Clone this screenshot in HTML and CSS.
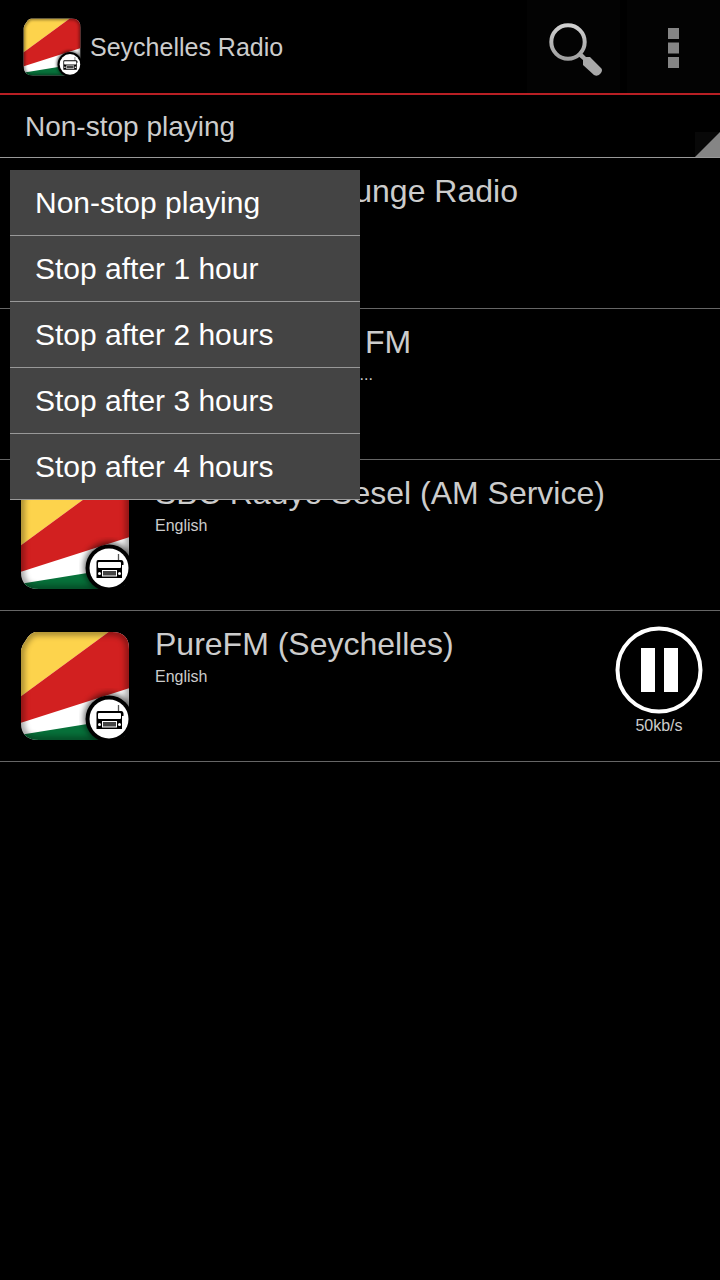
FILE: index.html
```html
<!DOCTYPE html>
<html lang="en">
<head>
  <meta charset="UTF-8" />
  <meta name="viewport" content="width=device-width, initial-scale=1.0"/>
  <title>Seychelles Radio</title>
  <link rel="stylesheet" href="styles.css">
</head>
<body>
  <svg class="sprite" aria-hidden="true">
    <defs>
      <clipPath id="tile-clip">
        <path id="tile-shape" d="M15 1H92Q109 1 109 18V92Q109 109 92 109H19Q1 109 1 92V19Q2 14 6 9Q9 3 15 1Z"/>
      </clipPath>
      <filter id="soft" x="-10%" y="-10%" width="120%" height="120%">
        <feGaussianBlur stdDeviation="3"/>
      </filter>
    </defs>
    <symbol id="flag-radio" viewBox="0 0 110 110">
      <g clip-path="url(#tile-clip)">
        <rect width="110" height="110" fill="#fff"/>
        <path d="M0 0H90L0 66Z" fill="#fdd34c"/>
        <path d="M90 0H110V57L0 92V66Z" fill="#d22020"/>
        <path d="M0 104L110 86V110H0Z" fill="#07713a"/>
        <circle cx="89" cy="87" r="25" fill="#000" opacity="0.6" filter="url(#soft)"/>
        <use href="#tile-shape" fill="none" stroke="#000" stroke-width="5" opacity="0.5" filter="url(#soft)"/>
      </g>
      <circle cx="89" cy="88" r="23.5" fill="#000"/>
      <circle cx="89" cy="88" r="19.5" fill="#fff"/>
      <path d="M98.5 74V81" stroke="#555" stroke-width="1.3"/>
      <path d="M78 80H101Q104 80 103.500 85H102V98H76.500V82Q76.500 80 78 80Z" fill="#000"/>
      <rect x="78" y="82" width="23" height="6" rx="1" fill="#fff"/>
      <rect x="82" y="90" width="15" height="6.500" fill="#fff"/>
      <rect x="83" y="91" width="13" height="4.500" fill="#444"/>
      <circle cx="79.500" cy="93.500" r="1.500" fill="#fff"/>
      <circle cx="99.500" cy="93.500" r="1.500" fill="#fff"/>
    </symbol>
  </svg>

  <header class="topbar">
    <svg class="logo" aria-hidden="true"><use href="#flag-radio"/></svg>
    <h1>Seychelles Radio</h1>
    <button class="bar-btn" aria-label="Search">
      <svg width="60" height="60" viewBox="0 0 60 60">
        <defs>
          <linearGradient id="metal" x1="0" y1="0" x2="0" y2="1">
            <stop offset="0" stop-color="#d0d0d0"/>
            <stop offset="1" stop-color="#a0a0a0"/>
          </linearGradient>
        </defs>
        <circle cx="24" cy="24" r="16.7" fill="none" stroke="url(#metal)" stroke-width="4"/>
        <path d="M33 37L37 34L42 39L46 39L57 50Q59 52 57 55Q54 59 50 57L39 47L39 42Z" fill="#a8a8a8"/>
      </svg>
    </button>
    <button class="bar-btn" aria-label="More options">
      <svg width="11" height="40" viewBox="0 0 11 40" fill="#858585">
        <rect width="11" height="11"/>
        <rect y="14.5" width="11" height="11"/>
        <rect y="29" width="11" height="11"/>
      </svg>
    </button>
  </header>

  <div class="timer">
    <select id="timer" aria-label="Stop timer">
      <option>Non-stop playing</option>
      <option>Stop after 1 hour</option>
      <option>Stop after 2 hours</option>
      <option>Stop after 3 hours</option>
      <option>Stop after 4 hours</option>
    </select>
    <div class="menu">
      <button>Non-stop playing</button>
      <button>Stop after 1 hour</button>
      <button>Stop after 2 hours</button>
      <button>Stop after 3 hours</button>
      <button>Stop after 4 hours</button>
    </div>
  </div>

  <main class="stations">
    <div class="station">
      <svg class="tile" aria-hidden="true"><use href="#flag-radio"/></svg>
      <div class="info">
        <h2>Seychelles Lounge Radio</h2>
        <p>English</p>
      </div>
    </div>
    <div class="station">
      <svg class="tile" aria-hidden="true"><use href="#flag-radio"/></svg>
      <div class="info">
        <h2>SBC Paradise FM</h2>
        <p>Creole, English, French, Pop...</p>
      </div>
    </div>
    <div class="station">
      <svg class="tile" aria-hidden="true"><use href="#flag-radio"/></svg>
      <div class="info">
        <h2>SBC Radyo Sesel (AM Service)</h2>
        <p>English</p>
      </div>
    </div>
    <div class="station">
      <svg class="tile" aria-hidden="true"><use href="#flag-radio"/></svg>
      <div class="info">
        <h2>PureFM (Seychelles)</h2>
        <p>English</p>
      </div>
      <div class="player">
        <button class="pause-btn" aria-label="Pause">
          <svg width="88" height="88" viewBox="0 0 88 88">
            <circle cx="44" cy="44" r="41.5" fill="none" stroke="#fff" stroke-width="4"/>
            <path d="M26 22H40V66H26ZM49 22H63V66H49Z" fill="#fff"/>
          </svg>
        </button>
        <span>50kb/s</span>
      </div>
    </div>
  </main>
</body>
</html>
```
FILE: styles.css
```css
* {
  box-sizing: border-box;
}

body {
  margin: 0;
  min-height: 100vh;
  background-color: #000;
  color: #ccc;
  font-family: 'Liberation Sans', Arial, sans-serif;
}

h1, h2, p {
  margin: 0;
  font-weight: normal;
}

button {
  padding: 0;
  border: none;
  background: none;
  color: inherit;
  font-family: inherit;
  cursor: pointer;
}

svg {
  display: block;
}

.sprite {
  position: absolute;
  width: 0;
  height: 0;
}

.topbar {
  display: flex;
  align-items: center;
  height: 95px;
  padding-left: 23px;
  border-bottom: 2px solid #b81f24;
}

.logo {
  width: 58px;
  height: 58px;
}

.topbar h1 {
  flex: 1;
  padding-top: 2px;
  padding-left: 9px;
  font-size: 25px;
}

.bar-btn {
  display: flex;
  align-items: center;
  justify-content: center;
  width: 93px;
  height: 93px;
  margin-left: 7px;
  padding-top: 2px;
  background-color: #030303;
}

.timer {
  position: relative;
  height: 63px;
  border-bottom: 1px solid #999;
}

.timer select {
  display: block;
  width: 100%;
  height: 62px;
  padding: 0 25px;
  border: none;
  border-radius: 0;
  appearance: none;
  background: linear-gradient(135deg, #080808 49%, #858585 51%) right bottom / 25px 25px no-repeat #000;
  color: #ccc;
  font-family: inherit;
  font-size: 28px;
}

/* open drop-down */
.menu {
  position: absolute;
  top: 75px;
  left: 10px;
  z-index: 1;
  width: 350px;
  background-color: #444;
}

.menu button {
  display: block;
  width: 100%;
  height: 66px;
  padding-left: 25px;
  border-bottom: 1px solid #999;
  color: #fff;
  font-size: 30px;
  text-align: left;
}

.station {
  display: flex;
  height: 151px;
  padding: 15px 17px 0 20px;
  border-bottom: 1px solid #666;
}

.tile {
  width: 110px;
  height: 110px;
  margin-top: 5px;
}

.info {
  flex: 1;
  padding-left: 25px;
}

.info h2 {
  font-size: 32px;
  line-height: 36px;
}

.info p {
  margin-top: 5px;
  font-size: 16px;
  line-height: 20px;
}

.player {
  display: flex;
  flex-direction: column;
  align-items: center;
  font-size: 16px;
  line-height: 20px;
}

.player span {
  margin-top: 2px;
}
```
